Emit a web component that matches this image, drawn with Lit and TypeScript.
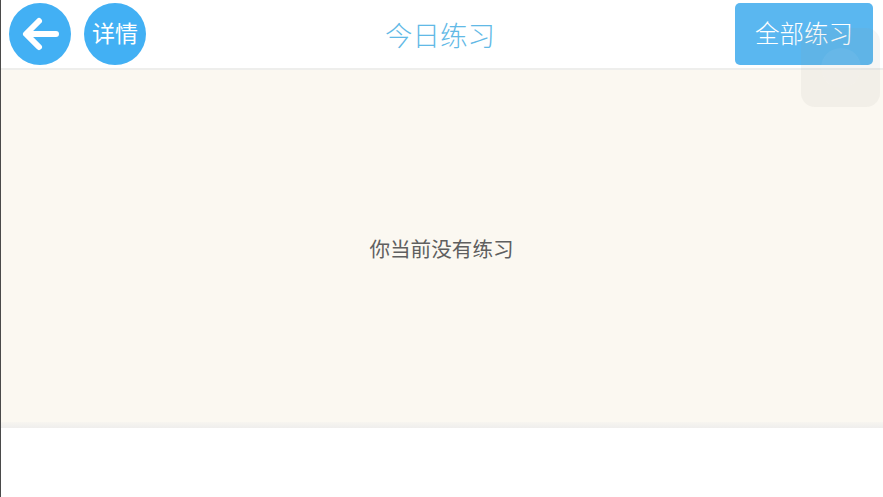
import { LitElement, html, css } from "lit";
import { customElement } from "lit/decorators.js";

@customElement("app-root")
export class AppRoot extends LitElement {
  static styles = css`
    :host {
      display: block;
      width: 883px;
      height: 497px;
      position: relative;
      overflow: hidden;
      background: #fff;
      font-family: "Noto Sans CJK SC", "Noto Sans", sans-serif;
    }
    .page {
      height: 100%;
      display: flex;
      flex-direction: column;
      border-left: 1px solid #4a4a4a;
      box-sizing: border-box;
    }
    .header {
      height: 68px;
      flex: none;
      display: grid;
      grid-template-columns: 1fr auto 1fr;
      align-items: center;
      background: #fff;
      border-bottom: 2px solid #eeeeec;
    }
    .left {
      display: flex;
      gap: 13px;
      padding-left: 8px;
      padding-bottom: 1px;
    }
    .circle {
      width: 62px;
      height: 62px;
      border-radius: 50%;
      background: #42b0f4;
      color: #fff;
      display: flex;
      align-items: center;
      justify-content: center;
      font-size: 23px;
      font-weight: 400;
      line-height: 1;
      padding-bottom: 2px;
      box-sizing: border-box;
    }
    .title {
      color: #62b9e6;
      font-size: 27.5px;
      font-weight: 300;
      line-height: 1;
      margin-right: 4px;
      margin-top: 1px;
    }
    .right {
      display: flex;
      justify-content: flex-end;
      padding-right: 10px;
    }
    .all {
      width: 138px;
      height: 62px;
      box-sizing: border-box;
      border-radius: 5px;
      background: #5ab7f0;
      color: #fff;
      display: flex;
      align-items: center;
      justify-content: center;
      font-size: 24.5px;
      font-weight: 300;
      line-height: 1;
      margin-bottom: 1px;
    }
    .content {
      height: 352px;
      flex: none;
      background: #fbf8f1;
      display: flex;
      align-items: center;
      justify-content: center;
      color: #5f5f5f;
      font-size: 20.6px;
      font-weight: 400;
      line-height: 1;
      padding-top: 4px;
      padding-right: 1px;
      box-sizing: border-box;
    }
    .band {
      height: 6px;
      flex: none;
      background: linear-gradient(#f7f5f0, #efeeed);
    }
    .assist {
      position: absolute;
      left: 801px;
      top: 28px;
      width: 79px;
      height: 79px;
      border-radius: 14px;
      background: rgba(150, 150, 140, 0.09);
      display: flex;
      align-items: center;
      justify-content: center;
    }
    .assist span {
      width: 40px;
      height: 40px;
      border-radius: 50%;
      background: rgba(255, 255, 255, 0.05);
    }
  `;

  render() {
    return html`
      <div class="page">
        <div class="header">
          <div class="left">
            <div class="circle">
              <svg width="40" height="40" viewBox="0 0 40 40" fill="none" stroke="#fff" stroke-width="6" stroke-linecap="round" stroke-linejoin="round">
                <path d="M36 21H7M19 8L6 21L19 34" />
              </svg>
            </div>
            <div class="circle">详情</div>
          </div>
          <div class="title">今日练习</div>
          <div class="right"><div class="all">全部练习</div></div>
        </div>
        <div class="content">你当前没有练习</div>
        <div class="band"></div>
      </div>
      <div class="assist"><span></span></div>
    `;
  }
}
